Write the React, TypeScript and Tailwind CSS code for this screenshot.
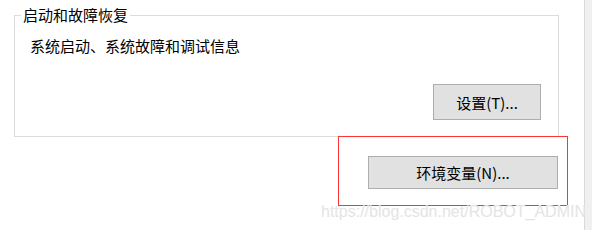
export default function App() {
  return (
    <div className="relative flex h-[230px] w-[592px] overflow-hidden bg-white font-['Noto_Sans_CJK_SC','Microsoft_YaHei',sans-serif] text-[15px] text-black">
      <div className="w-[584px] pt-[6px]">
        <fieldset className="ml-[14px] w-[545px] border border-[#dcdcdc] pb-[16px] pl-[8px] pr-[17px] pt-[12px]">
          <legend className="-ml-[2px] px-[2px] leading-[18px]">启动和故障恢复</legend>
          <p className="pl-[7px] leading-[20px]">系统启动、系统故障和调试信息</p>
          <div className="mt-[28px] flex justify-end">
            <button className="h-[36px] w-[108px] border border-[#adadad] bg-[#e1e1e1] leading-none">
              设置(T)...
            </button>
          </div>
        </fieldset>

        <div className="-mt-[1px] ml-[338px] h-[70px] w-[230px] border border-[#ff3333] pl-[29px] pt-[19px]">
          <button className="h-[33px] w-[190px] border border-[#adadad] bg-[#e1e1e1] leading-none">
            环境变量(N)...
          </button>
        </div>
      </div>

      <div className="flex-1 border-l border-[#d9d9d9] bg-[#f0f0f0]" />

      <span className="pointer-events-none absolute left-[321px] top-[204px] font-['Liberation_Sans',Arial,sans-serif] text-[16px] leading-[16px] text-[#e4e4e4]">
        https://blog.csdn.net/ROBOT_ADMIN
      </span>
    </div>
  );
}
